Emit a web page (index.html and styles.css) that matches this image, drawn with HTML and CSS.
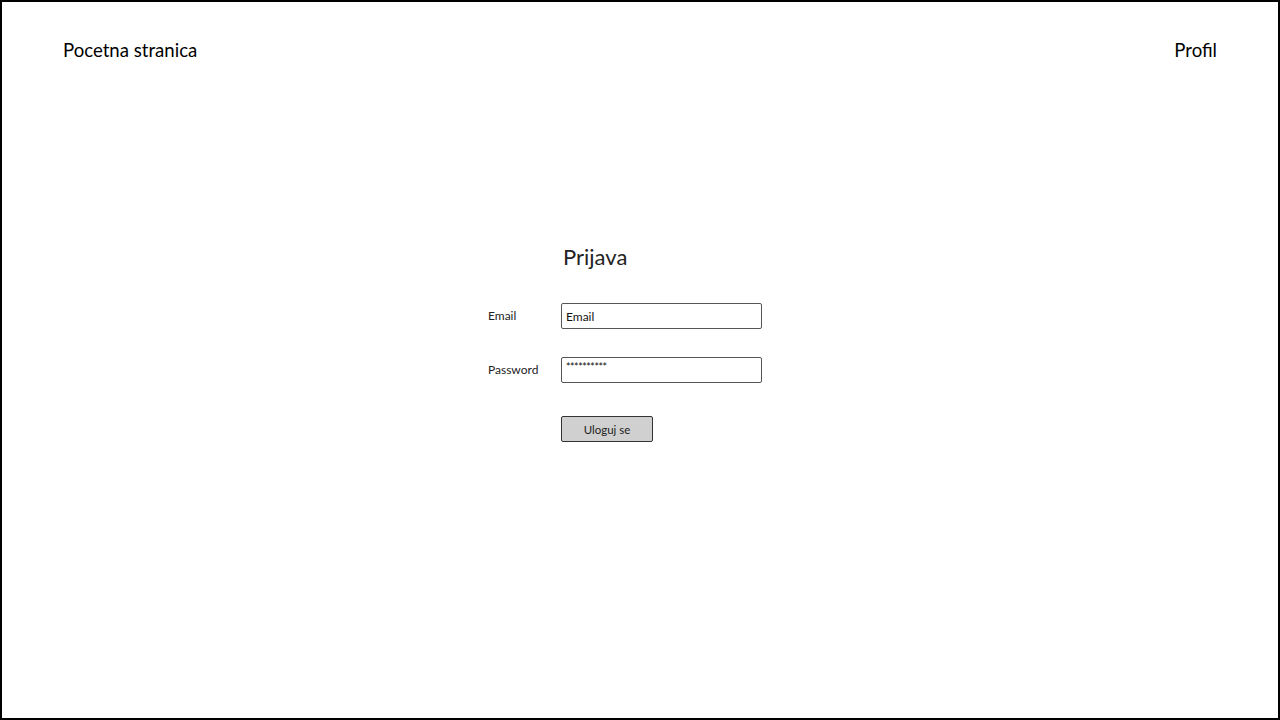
FILE: index.html
```html
<!DOCTYPE html>
<html lang="hr">
<head>
<meta charset="utf-8">
<title>Prijava</title>
<link rel="stylesheet" href="styles.css">
</head>
<body>
<div class="frame">
  <header class="topbar">
    <a class="nav-link">Pocetna stranica</a>
    <a class="nav-link">Profil</a>
  </header>
  <main class="login">
    <h1 class="title">Prijava</h1>
    <div class="row">
      <label class="label">Email</label>
      <div class="field"><span class="field-text">Email</span></div>
    </div>
    <div class="row">
      <label class="label">Password</label>
      <div class="field"><span class="field-text pw">**********</span></div>
    </div>
    <div class="row row-btn">
      <span class="label"></span>
      <button class="btn">Uloguj se</button>
    </div>
  </main>
</div>
</body>
</html>
```

FILE: styles.css
```css
* { box-sizing: border-box; }
html, body { margin: 0; padding: 0; background: #fff; }
body { font-family: Lato, "Open Sans", sans-serif; color: #111; }

.frame {
  width: 1280px;
  height: 720px;
  border: 2px solid #000;
  display: flex;
  flex-direction: column;
}

.topbar {
  display: flex;
  justify-content: space-between;
  padding: 37px 61px 0 61px;
}
.nav-link {
  font-size: 18.6px;
  line-height: 22px;
  color: #000;
  text-decoration: none;
}

.login {
  padding: 0 0 0 486px;
  margin-top: 183px;
  display: flex;
  flex-direction: column;
}
.title {
  margin: 0 0 33px 75px;
  font-size: 22px;
  line-height: 26px;
  font-weight: 400;
  color: #222;
}
.row {
  display: flex;
  align-items: center;
  margin-bottom: 28px;
}
.row-btn { margin-top: 5px; }
.label {
  width: 73px;
  font-size: 12px;
  color: #222;
  margin-top: -2px;
}
.field {
  width: 201px;
  height: 26px;
  border: 1px solid #555;
  border-radius: 2px;
  padding: 0 4px;
  display: flex;
  align-items: center;
}
.field-text {
  font-size: 12px;
  color: #111;
}
.field-text.pw {
  align-self: flex-start;
  margin-top: 3px;
  font-size: 10.5px;
  letter-spacing: -0.4px;
  line-height: 12px;
}
.btn {
  width: 92px;
  height: 26px;
  background: #d0d0d0;
  border: 1px solid #333;
  border-radius: 2px;
  font-family: Lato, "Open Sans", sans-serif;
  font-size: 11.5px;
  color: #222;
  padding: 0;
}
```
